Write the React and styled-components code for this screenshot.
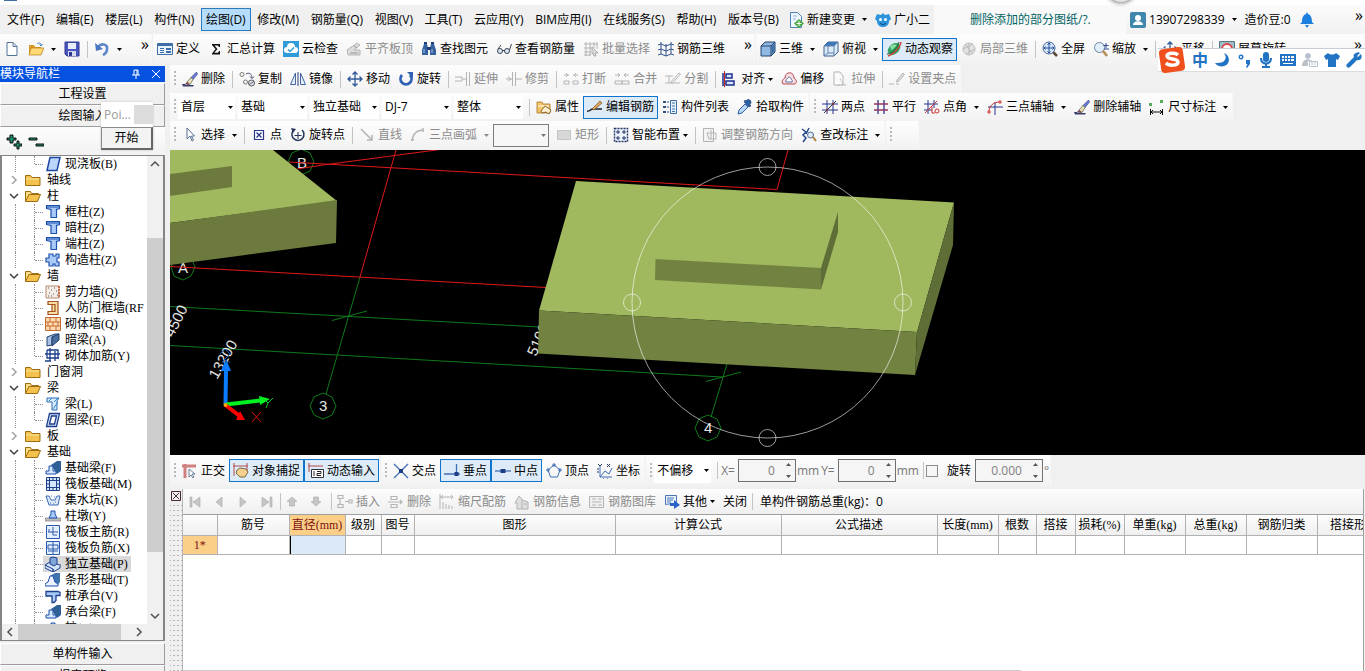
import React from 'react';
import styled, { createGlobalStyle, css } from 'styled-components';

const UI_FONT = '"Open Sans", "Noto Sans CJK SC", sans-serif';
const SONG_FONT = '"Liberation Serif", "Noto Sans CJK SC", serif';

const GlobalStyle = createGlobalStyle`
  * {
    box-sizing: border-box;
  }

  body {
    margin: 0;
    background: #f0f0f0;
    color: #000;
    font-family: ${UI_FONT};
    font-size: 12px;
    line-height: 16px;
    overflow: hidden;
  }

  button, input, select {
    font: inherit;
    color: inherit;
  }
`;

/* ---------- icons ---------- */

const G = '#b4b4b4';
const N = '#27348b';

const glyphs = {
  newFile: <path d="M3 1.500h6l4 4v9H3z M9 1.500v4h4" fill="#fff" stroke="#53759b" />,
  open: (
    <>
      <path d="M1 4h5l1 2h6v8H1z" fill="#d99a25" />
      <path d="M3 7h13l-3 7H1z" fill="#ffd976" stroke="#b37b14" strokeWidth=".7" />
      <path d="M9 3c2-2 4-1 4 1M11.500 3.500l1.500 1.500 1.500-2" fill="none" stroke="#3c7fb4" />
    </>
  ),
  save: (
    <>
      <path d="M1 1h14v14H3l-2-2z" fill="#4b56bf" stroke="#2d3694" />
      <path d="M4 2h8v6H4z" fill="#e8edfb" />
      <path d="M4 10h8v5H4z" fill="#d5daf0" />
      <path d="M5 11h3v4H5z" fill="#2d3694" />
    </>
  ),
  undo: (
    <>
      <path d="M4 6c4-5 10-2 9 2 0 3-2 5-4 6" fill="none" stroke="#5b86cc" strokeWidth="2.600" />
      <path d="M1 2l1 8 7-2z" fill="#4a77c4" />
    </>
  ),
  define: (
    <>
      <path d="M.5 2.500h15v11H.5z" fill="#eaf2fb" stroke="#3e6ea8" />
      <path d="M1 3h14v2H1z" fill="#3e6ea8" />
      <path d="M3 7h4v1H3zM3 9h4v1H3zM3 11h4v1H3zM9 7h5v2H9zM9 10h5v2H9z" fill="#3e6ea8" />
    </>
  ),
  sigma: <path d="M4 3h8v3h-1l-1-1.500H6.500L9.500 8l-3.300 3.800H10l1.200-1.800H12v3.500H4v-1L7.500 8 4 4z" fill="#111" />,
  cloud: (
    <>
      <path d="M0 0h16v16H0z" fill="#2f9bd8" />
      <path d="M4 12a3 3 0 0 1 0-6 4 4 0 0 1 8 0 3 3 0 0 1 0 6z" fill="#fff" />
      <path d="M5 8.500l2 2 4-4" fill="none" stroke="#2f9bd8" strokeWidth="1.500" />
    </>
  ),
  slabTop: (
    <>
      <path d="M1 9l10-7 3 2-6 5h6v5H2z" fill="#dcdcdc" stroke={G} />
      <path d="M4 12h8M8 5l3 2" stroke="#999" />
    </>
  ),
  binoc: (
    <>
      <path d="M3 3h3l1 4v7H1V9zM10 3h3l2 6v5H9V7z" fill="#35619e" />
      <path d="M6 6h4v3H6zM3 1h3v2H3zM10 1h3v2h-3z" fill="#1e3f75" />
      <path d="M3 8v4M11 8v4" stroke="#a8c8ee" />
    </>
  ),
  glasses: (
    <>
      <circle cx="4" cy="10" r="2.500" fill="#dce9f5" stroke="#3c3f52" />
      <circle cx="11" cy="10" r="2.500" fill="#dce9f5" stroke="#3c3f52" />
      <path d="M6.500 9.500h2M2 8l3-4M13.500 9l2-6" stroke="#3c3f52" fill="none" />
    </>
  ),
  batch: (
    <>
      <path d="M1 3h14M1 7h8M1 11h7M1 14h7M3 1v14M7 1v14M11 1v6M14 1v7" stroke={G} />
      <path d="M9 6l6 6h-3l1 3-2 0-1-3-1 1z" fill="#ddd" stroke="#999" strokeWidth=".7" />
    </>
  ),
  grid3d: <path d="M3 1v12M8 3v12M13 1v12M0 4l3-1 5 2 5-2 3 1M0 9l3-1 5 2 5-2 3 1M0 14l3-1 5 2 5-2 3 1" stroke="#34548c" fill="none" />,
  cube: (
    <>
      <path d="M1 5l4-4h10v10l-4 4H1z" fill="#8fb9e3" stroke="#24426b" />
      <path d="M1 5h10v10M11 5l4-4" fill="none" stroke="#24426b" />
      <path d="M11.500 5.500l3-3v8l-3 3z" fill="#3f6fa5" />
    </>
  ),
  cubeTop: (
    <>
      <path d="M1 5l4-4h10v10l-4 4H1z" fill="#dcebf8" stroke="#3a5f8c" />
      <path d="M1 5l4-4h10l-4 4z" fill="#3f78b8" />
      <path d="M1 5h10v10M11 5l4-4M5 5v7h6M5 12l-4 3" fill="none" stroke="#5c82ad" />
    </>
  ),
  orbit: (
    <>
      <ellipse cx="8" cy="8" rx="7" ry="5" fill="#33a564" transform="rotate(-40 8 8)" />
      <path d="M4 6c2-3 5-3 7-2l-5 5z" fill="#8be0a2" />
      <path d="M2 15C6 14 14 8 15 1" fill="none" stroke="#d03a2f" strokeWidth="1.400" />
      <path d="M1 13c4 0 10-5 12-12" fill="none" stroke="#20563a" />
    </>
  ),
  orbitOff: (
    <>
      <circle cx="8" cy="8" r="6" fill="#e2e2e2" stroke="#c0c0c0" />
      <path d="M4 3l8 10M2 8l10-5M5 13l9-5M8 2v12" stroke="#bbb" />
    </>
  ),
  full: (
    <>
      <path d="M11 11l4 4" stroke="#5a4a3a" strokeWidth="2.500" />
      <circle cx="7" cy="7" r="6" fill="#d6e8fa" stroke="#4a6590" />
      <path d="M7 2v10M2 7h10M5.500 3.500L7 2l1.500 1.500M5.500 10.500L7 12l1.500-1.500M3.500 5.500L2 7l1.500 1.500M10.500 5.500L12 7l-1.500 1.500" fill="none" stroke="#1f4e9c" />
    </>
  ),
  zoomIcon: (
    <>
      <circle cx="6.500" cy="6.500" r="5" fill="#e1effb" stroke="#71859f" />
      <path d="M10 10l4 5" stroke="#b78952" strokeWidth="2.500" />
      <path d="M13 2v5M10.500 4.500h5M11 8h5" stroke="#2d4b8f" />
    </>
  ),
  move: (
    <path d="M8 1v14M1 8h14M5.500 3.500L8 1l2.500 2.500M5.500 12.500L8 15l2.500-2.500M3.500 5.500L1 8l2.500 2.500M12.500 5.500L15 8l-2.500 2.500" fill="none" stroke="#325a9b" strokeWidth="1.300" />
  ),
  screenRotate: (
    <>
      <path d="M.5 .5h15v15H.5z" fill="#9bc0c9" stroke="#53777c" />
      <circle cx="8" cy="8" r="5" fill="#fff" stroke="#e0454f" strokeWidth="2" />
    </>
  ),
  brush: (
    <>
      <path d="M14.500 1L9 6.500l2 2L15.500 3z" fill="#6a7ad0" stroke="#30407f" strokeWidth=".6" />
      <path d="M9 6.500L5 11l3 2.500 3-5z" fill="#ece2b8" stroke="#554" strokeWidth=".7" />
      <path d="M5 11l-2 2 3 1 2-.5z" fill="#7a4350" />
      <path d="M0 13h3l1 1h8l-1 1.500H1z" fill="#39406e" />
    </>
  ),
  copy: (
    <>
      <circle cx="3" cy="3.500" r="2" fill="none" stroke="#777" />
      <circle cx="6.500" cy="11" r="2" fill="none" stroke="#777" />
      <circle cx="12.500" cy="12" r="3" fill="#e6e9ee" stroke="#555" />
      <path d="M7 3c3-2 6 0 6 4M11 5.500l2 2 2-2M10.500 13.500l4-3" fill="none" stroke="#44506e" />
    </>
  ),
  mirror: (
    <>
      <path d="M5.500 2v11.500H.5zM10.500 2v11.500h5z" fill="#e4eefa" stroke="#4365a2" />
      <path d="M8 1v14" stroke="#27407a" />
    </>
  ),
  rotate: (
    <>
      <path d="M4 4a5.500 5.500 0 1 0 8 0" fill="none" stroke="#2f62b5" strokeWidth="2.800" />
      <path d="M9 1h6v6z" fill="#2f62b5" />
    </>
  ),
  extend: <path d="M0 6h7v4H0M7 8h4M14.500 1v14M11.500 1v14" fill="none" stroke={G} />,
  trim: <path d="M0 8h6M10 8h6M6.500 1v14M9.500 1v14M2 6l3 2-3 2" fill="none" stroke={G} />,
  breakIcon: <path d="M1 4h5M10 4h5M1 10h5v3H1zM10 10h5v3h-5zM3 2l2 2-2 2M13 2l-2 2 2 2" fill="none" stroke={G} />,
  merge: <path d="M1 4h5M10 4h5M1 10h7v3H1zM8 10h7v3H8zM4 2l2 2-2 2M12 2l-2 2 2 2" fill="none" stroke={G} />,
  splitIcon: <path d="M0 5h8M0 12h15M4 5v7M6 11l8-9 1.500 1-8 9z" fill="none" stroke={G} />,
  align: (
    <>
      <path d="M2.500 0v16" stroke="#c9211e" />
      <path d="M1 2v13" stroke="#1b2f8f" strokeWidth="1.500" />
      <path d="M4 3h6v4H4zM4 10h8v4H4z" fill="#dbe6fa" stroke="#1b2f8f" strokeWidth="1.500" />
    </>
  ),
  offset: (
    <>
      <path d="M2 13c-2-3 0-5 2-6 0-7 9-7 9 0 3 2 3 5 1 6z" fill="#f7dede" stroke="#b64a55" />
      <path d="M5 11c-1-2 1-2 1-3 1-3 4-2 4 0 1 1 2 2 1 3z" fill="#fff" stroke="#5a6fa8" />
    </>
  ),
  stretch: (
    <>
      <path d="M2 1h6l3 4v9H2z" fill="#fafafa" stroke={G} />
      <path d="M8 8l4 6M6 14h9" stroke={G} strokeDasharray="2 1" />
    </>
  ),
  grip: <path d="M0 13h5M7 13h3M8 9l6-7 1.500 1.500-6 7-2 .5z" fill="#ddd" stroke={G} />,
  property: (
    <>
      <path d="M1 3h5l1 2h7v9H1z" fill="#f4c36a" stroke="#a87420" strokeWidth=".8" />
      <path d="M2 7h11" stroke="#fff" />
      <path d="M5 12l4-5 6 4-2 4-3-2-4 1z" fill="#fff1cf" stroke="#6f4a12" strokeWidth=".8" />
    </>
  ),
  editRebar: (
    <>
      <path d="M0 12c3 1 3-2 6-2h9" fill="none" stroke="#1f1f1f" strokeWidth="1.400" />
      <path d="M5 10l8-8 2 2-8 7z" fill="#e0a868" stroke="#6f4a12" strokeWidth=".7" />
    </>
  ),
  list: (
    <>
      <path d="M8.500 1.500h6v13h-6z" fill="#eaf2fb" stroke="#3e6ea8" />
      <path d="M10 4h3M10 7h3M10 10h3M10 12.500h3" stroke="#3e6ea8" />
      <path d="M1 2h3v2H1zM1 7h3v2H1zM1 12h3v2H1zM5 2.500h2v1H5zM5 7.500h2v1H5zM5 12.500h2v1H5z" fill="#34517e" />
    </>
  ),
  picker: (
    <>
      <path d="M9 2c2-3 5-1 5 1s-1 2-1 3l1 1-2 1-5-5 1-2z" fill="#2d5fa5" stroke="#1e3e6b" strokeWidth=".6" />
      <path d="M8 5l3 3-6 6-4 1 1-4z" fill="#b9d7f2" stroke="#2d5fa5" />
    </>
  ),
  twoPoint: (
    <>
      <path d="M5 1v14M11 1v14M0 5h16M0 11h16" stroke={N} />
      <path d="M2 14L14 2" stroke="#333" />
      <path d="M4 10l2 2M10 4l2 2" stroke="#c33" />
    </>
  ),
  parallel: (
    <>
      <path d="M5 1v14M11 1v14" stroke={N} strokeWidth="1.300" />
      <path d="M1 5h14M1 11h14" stroke="#93365b" strokeWidth="1.300" />
    </>
  ),
  angle: (
    <>
      <path d="M4 1v14M10 1v8M0 5h14M0 11h8" stroke={N} />
      <path d="M1 14L13 2" stroke="#c33" />
      <circle cx="13" cy="12" r="2" fill="none" stroke="#c33" />
      <path d="M8 8v6h3" fill="none" stroke="#c33" />
    </>
  ),
  threeAxis: (
    <>
      <path d="M8 3v13M1 8h15" stroke={N} />
      <path d="M2 13C2 7 6 3 13 3" fill="none" stroke="#c33" />
      <path d="M1 12h2v2H1zM12 2h2v2h-2z" fill="#fff" stroke="#c33" />
    </>
  ),
  dimension: (
    <>
      <path d="M0 4h3v3H0zM11 1h3v3h-3z" fill="#58ad5a" />
      <path d="M1.500 10v6M13.500 10v6M1.500 13h12M4 11l-2 2 2 2M11 11l2 2-2 2" fill="none" stroke="#111" />
    </>
  ),
  cursor: <path d="M5 1v11l3-3 2 5 1.500-.7-2-4.300h3z" fill="#fff" stroke="#5a6f94" />,
  point: (
    <>
      <path d="M3.500 3.500h9v9h-9z" fill="#fff" stroke={N} strokeWidth="1.200" />
      <path d="M5.500 5.500l5 5M10.500 5.500l-5 5" stroke={N} strokeWidth="1.300" />
    </>
  ),
  rotPoint: (
    <>
      <path d="M3 4a6 6 0 1 0 9-1" fill="none" stroke="#26355c" strokeWidth="1.500" />
      <path d="M1 1l5 1-3 4z" fill="#26355c" />
      <path d="M8 5v7M4.500 8.500h7" stroke="#26355c" />
    </>
  ),
  lineIcon: <path d="M2 2l11 11M13 8v5H8" fill="none" stroke={G} strokeWidth="1.500" />,
  arc: <path d="M2 14C3 7 7 3 13 3M13 1v4M1 13h3" fill="none" stroke={G} strokeWidth="1.500" />,
  rect: <path d="M1.500 3.500h13v9h-13z" fill="#d7d7d7" stroke="#c4c4c4" />,
  smart: (
    <>
      <path d="M1.500 1.500h13v13h-13z" fill="#eef3fb" stroke="#1f3566" strokeWidth="1.400" strokeDasharray="2 1" />
      <path d="M5 3v4M3 5h4M11 3v4M9 5h4M5 9v4M3 11h4M11 9v4M9 11h4" stroke="#1f3566" />
    </>
  ),
  adjust: (
    <>
      <path d="M1.500 1.500h10v13h-10z" fill="#f3f3f3" stroke={G} />
      <path d="M5 6h9v6H7zM9 3v9" fill="none" stroke={G} />
    </>
  ),
  checkMark: (
    <>
      <path d="M1 2l4 3-3 3 3 3-3 4M8 1L5 7" fill="none" stroke="#264a8d" strokeWidth="1.500" />
      <circle cx="9.500" cy="8" r="3" fill="#dceafa" stroke="#546b8f" />
      <path d="M12 10l3 4" stroke="#b07a3a" strokeWidth="2" />
    </>
  ),
  ortho: (
    <>
      <path d="M0 3h14M3 1v14" stroke="#d18080" strokeWidth="3" />
      <path d="M7 6v8l2-2 2 3 1-1-2-3h3z" fill="#fff" stroke="#4d6580" strokeWidth=".8" />
    </>
  ),
  snap: (
    <>
      <path d="M1 0v13M0 3h15M14 0v8" stroke="#b34d4d" />
      <path d="M4 7l3-2 6 1 2 3-3 5H7l-4-4z" fill="#f5d18d" stroke="#5e4a26" strokeWidth=".8" />
    </>
  ),
  dyn: (
    <>
      <path d="M1 0v9M0 3h15" stroke="#b34d4d" />
      <path d="M3.500 6.500h12v8h-12z" fill="#fff" stroke="#333" />
      <path d="M6 8v5M9 8.500h4v2H9v2h4" fill="none" stroke="#222" />
    </>
  ),
  cross: (
    <>
      <path d="M1 1l14 14M15 1L1 15" stroke="#3f6fb5" strokeWidth="1.300" />
      <path d="M6 6h4v4H6z" fill="#1d3e86" />
    </>
  ),
  perp: (
    <>
      <path d="M0 11h16M12.500 1v10" stroke="#3f6fb5" strokeWidth="1.300" />
      <path d="M10.500 9h4v4h-4z" fill="#1d3e86" />
    </>
  ),
  mid: (
    <>
      <path d="M0 8h16" stroke="#3f6fb5" strokeWidth="1.300" />
      <path d="M5.500 6h5v4h-5z" fill="#1d3e86" />
    </>
  ),
  vertex: <path d="M8 2l6 5-2.500 7h-7L2 7z M7 1h2v2H7z M1 6h2v2H1zM13 6h2v2h-2z" fill="none" stroke="#3f6fb5" />,
  coord: (
    <>
      <path d="M3 3v11h12M3 14l5-6 4 3 3-6" fill="none" stroke="#3f6fb5" />
      <path d="M1 1l2 2 2-2M10 1l3 3M13 1l-3 3M0 6h2M0 9h2M6 16h1M10 16h1" fill="none" stroke="#26355c" />
    </>
  ),
  first: <path d="M3 3h2v10H3zM13 3v10L6 8z" fill="#c6c6c6" stroke="#a8a8a8" strokeWidth=".6" />,
  prev: <path d="M11 3v10L5 8z" fill="#c6c6c6" stroke="#a8a8a8" strokeWidth=".6" />,
  next: <path d="M5 3v10l6-5z" fill="#c6c6c6" stroke="#a8a8a8" strokeWidth=".6" />,
  last: <path d="M11 3h2v10h-2zM3 3v10l7-5z" fill="#c6c6c6" stroke="#a8a8a8" strokeWidth=".6" />,
  up: <path d="M6 3l5 4.500H8.500V12h-5V7.500H1z" fill="#c6c6c6" stroke="#a8a8a8" strokeWidth=".6" />,
  down: <path d="M6 12l5-4.500H8.500V3h-5v4.500H1z" fill="#c6c6c6" stroke="#a8a8a8" strokeWidth=".6" />,
  insert: <path d="M1 1.500h5v3H1zM1 10.500h5v3H1zM3 5v5M8 7.500h4M12 6h3v3h-3z" fill="none" stroke={G} strokeWidth="1.200" />,
  remove: <path d="M3 2.500h6v3H3zM3 10.500h6v3H3zM0 8h14M12 6l2 2-2 2" fill="none" stroke={G} strokeWidth="1.200" />,
  scale: <path d="M1 0v15M1 3h13M4 1L2 3l2 2M12 1l2 2-2 2M4 8v7M7 10v5M10 11v4M13 12v3" fill="none" stroke={G} />,
  info: <path d="M1 9l4-7 3 3v10H3V9zM8 6l6 2v7H8M10 10h3" fill="#dedede" stroke={G} />,
  library: <path d="M.5 2.500h14v11H.5zM3 5h4M9 5h4M3 8h9M3 11h4M9 11h4" fill="#efefef" stroke={G} />,
  other: (
    <>
      <path d="M1.500 1.500h11v10l-4-2-7 1z" fill="#e7f0fb" stroke="#4d76b5" />
      <path d="M3 4h7M3 6h6M3 8h4" stroke="#4d76b5" />
      <path d="M6 9h4V6l6 5-6 4v-3H6z" fill="#2b62c9" />
    </>
  ),
  change: (
    <>
      <path d="M2.500 .5h7l4 4v11h-11z" fill="#eef6ff" stroke="#4f83b5" />
      <path d="M5 4h4M5 7h3" stroke="#8fb4d6" />
      <path d="M11 7l5 4.500L11 16l-5-4.500z" fill="#49a942" />
      <path d="M11 9v5M8.500 11.500h5" stroke="#fff" />
    </>
  ),
  mascot: (
    <>
      <path d="M8 1l2 2 4-1 2 5-2 2c0 4-3 6-6 6s-6-2-6-6L0 7l2-5 4 1z" fill="#2f93dc" />
      <circle cx="5.500" cy="7.500" r="1.500" fill="#fff" />
      <circle cx="10.500" cy="7.500" r="1.500" fill="#fff" />
      <path d="M5 11c2 2 4 2 6 0" fill="none" stroke="#0c3c6c" />
    </>
  ),
  user: (
    <>
      <rect width="16" height="16" rx="2" fill="#3f87ad" />
      <circle cx="8" cy="6" r="3" fill="#fff" />
      <path d="M3 13c0-5 10-5 10 0z" fill="#fff" />
    </>
  ),
  bell: <path d="M8 0l1 2c3 1 4 4 4 8l2 2H1l2-2c0-4 1-7 4-8zM6 13h4l-2 3z" fill="#1d7fe0" />,

  /* tree */
  folder: (
    <>
      <path d="M.5 3.500h5l1.500 2h8v8H.5z" fill="#f4c14d" stroke="#9c6d14" />
      <path d="M1 7h13" stroke="#fde9a8" />
    </>
  ),
  folderOpen: (
    <>
      <path d="M.5 13V3.500h5l1 2h7V7" fill="#f9dc83" stroke="#9c6d14" />
      <path d="M.5 13.500L4 6.500h11.500l-3 7z" fill="#f4c14d" stroke="#9c6d14" />
    </>
  ),
  slab: <path d="M5 1.500h10L12 14.500H2z" fill="#bcd6fb" stroke="#1d46a0" strokeWidth="1.500" />,
  column: <path d="M1.500 1.500h13v3l-3 1v8H6v-8l-4.500-1z M1.500 3h13" fill="#a9cbf7" stroke="#1d4fae" strokeWidth="1.200" />,
  tieColumn: <path d="M4 2h4v2h3V2h3v4h-2v4h2v4h-4v-2H8v2H4v-4H1V6h3z" fill="#a9cbf7" stroke="#1d4fae" strokeWidth="1.200" />,
  shearWall: (
    <>
      <path d="M1 2h13v12H1z" fill="#f5ede6" stroke="#b98b70" />
      <path d="M3 4h1M6 6h1M9 4h1M4 9h1M8 10h1M11 7h1M6 12h1M12 11h1M3 12h1" stroke="#555" />
      <path d="M14 2v12" stroke="#c4532a" strokeWidth="1.500" strokeDasharray="2 1" />
    </>
  ),
  doorWall: <path d="M3 1.500h10v13H3v-3h4v-7H3zM7 4.500h3v7H7" fill="#f8dfa6" stroke="#a4511d" strokeWidth="1.200" />,
  brick: (
    <>
      <path d="M.5 1.500h15v13H.5z" fill="#ffdcb4" stroke="#c4682c" />
      <path d="M1 6h14M1 10h14M5 2v4M11 2v4M8 6v4M3 6v4M13 6v4M5 10v4M11 10v4" stroke="#c4682c" />
    </>
  ),
  hiddenBeam: (
    <>
      <path d="M2 5l8-3h4l-7 3v8l-5 1z" fill="#a9c3e6" stroke="#25406f" />
      <path d="M7 5l7-3v6l-7 6z" fill="#4a6f9f" stroke="#25406f" />
    </>
  ),
  wallRebar: <path d="M2 2h11v9M2 2v8h12M5 0v13M10 3v10M0 6h15M0 13h6" fill="none" stroke="#1d3f8c" strokeWidth="1.300" />,
  beam: (
    <>
      <path d="M2 2h12l-2 3v9H7V6H2z" fill="#d8e9fd" stroke="#2c6cb0" />
      <path d="M8 13l5-7M4 5l3-3M9 6l4-4" stroke="#2c8cd0" />
    </>
  ),
  ringBeam: <path d="M4.500 1.500h10l-3 13h-10zM6.500 4h5l-2 8h-5z" fill="#cfe1fb" fillRule="evenodd" stroke="#1d3f8c" strokeWidth="1.300" />,
  footBeam: (
    <>
      <path d="M6 5l6-4h4v10l-4 3z" fill="#2e6095" />
      <path d="M1 14v-3h3V6h4v5h3v3z" fill="#d4e6fb" stroke="#1d4fae" />
    </>
  ),
  raft: <path d="M1.500 1.500h13v13h-13zM4.500 4.500h7v7h-7zM4.500 1.500v13M8 1.500v3M8 11.500v3M11.500 1.500v13M1.500 4.500h13M1.500 8h3M11.500 8h3M1.500 11.500h13" fill="#d4e6fb" stroke="#1d3f8c" />,
  pit: (
    <>
      <path d="M1 4h3l2 4h4l2-4h3l-2 9H4z" fill="#dbe9fa" stroke="#3a6ab4" />
      <path d="M6 4h1M9 5h1M5 11h1M8 12h1M10 10h1" stroke="#3a6ab4" />
    </>
  ),
  pier: (
    <>
      <path d="M0 10h16v3H0z" fill="#bdbdbd" stroke="#777" strokeWidth=".6" />
      <path d="M6 3h4v3l2 4H4l2-4z" fill="#a9cbf7" stroke="#1d4fae" />
    </>
  ),
  raftMain: <path d="M1.500 1.500h13v13h-13zM3 8h10M8 3v8h4M4 8V5" fill="#e4effd" stroke="#2b59b0" />,
  raftNeg: <path d="M1.500 1.500h13v13h-13zM3 5h10v4H3zM3 11h10M8 2v12" fill="#e4effd" stroke="#2b59b0" />,
  isoFoot: (
    <>
      <path d="M0 9l5-3 10 3-7 5z" fill="#d4e6fb" stroke="#1d3f8c" />
      <path d="M0 9v3l8 4v-3zM8 13v3l7-4V8" fill="#d4e6fb" stroke="#1d3f8c" />
      <path d="M5 2l3-1 4 1v6l-3 2-4-2z" fill="#7ea6d8" stroke="#1d3f8c" />
    </>
  ),
  stripFoot: (
    <>
      <path d="M5 4l5-3h5v9l-3 4z" fill="#3f73ad" />
      <path d="M0 14v-2l3-2 2-6h3l2 6 3 2v2z" fill="#e9f2fd" stroke="#1d4fae" />
    </>
  ),
  pileCap: <path d="M1 3.500h12l2 1v3h-4v5l-2 2H7V8H1z" fill="#a9cbf7" stroke="#1d3f8c" strokeWidth="1.300" />,
};

const IconSvg = styled.svg`
  flex: none;
  width: 16px;
  height: 16px;
`;

const Icon = ({ name }) => (
  <IconSvg viewBox="0 0 16 16" aria-hidden="true">{glyphs[name]}</IconSvg>
);

const CaretSvg = styled.svg`
  flex: none;
  width: 5px;
  height: 3px;
`;

const Caret = () => (
  <CaretSvg viewBox="0 0 5 3" aria-hidden="true">
    <path d="M0 0h5L2.500 3z" fill="currentColor" />
  </CaretSvg>
);

/* ---------- frame ---------- */

const Window = styled.div`
  position: relative;
  display: flex;
  flex-direction: column;
  height: 100vh;
  overflow: hidden;
  background: #f0f0f0;
`;

const TitleEdge = styled.div`
  flex: none;
  height: 5px;
  padding-left: 4px;
  background: #fff;

  &::before {
    content: '';
    display: block;
    width: 13px;
    height: 1px;
    background: #3f6f9f;
  }
`;

const Puck = styled.div`
  position: absolute;
  top: -28px;
  left: 81%;
  width: 30px;
  height: 30px;
  border-radius: 50%;
  background: #e4e4e4;
  box-shadow: 0 0 4px 1px #777;
`;

const MenuBar = styled.nav`
  display: flex;
  flex: none;
  align-items: center;
  height: 29px;
  padding-left: 2px;
  white-space: nowrap;
`;

const MenuList = styled.div`
  display: flex;
  flex: none;
  justify-content: space-between;
  width: 782px;
`;

const MenuItem = styled.button`
  height: 23px;
  padding: 0 4px;
  border: 1px solid ${p => (p.$active ? '#2a7ac0' : 'transparent')};
  background: ${p => (p.$active ? '#b5dcfb' : 'transparent')};
`;

const Notice = styled.a`
  display: flex;
  flex: none;
  align-items: center;
  height: 29px;
  width: 192px;
  padding-left: 36px;
  background: #f9f9f9;
  color: #006464;
  text-decoration: none;
`;

const AccountBar = styled.div`
  display: flex;
  flex: 1;
  align-items: center;
  height: 29px;
  background: linear-gradient(#fbfbfb, #f1f1f1);
`;

const ToolRow = styled.div`
  display: flex;
  flex: none;
  height: ${p => (p.$tall ? 30 : 28)}px;
  white-space: nowrap;
`;

const Toolbar = styled.div`
  display: flex;
  flex: ${p => (p.$grow ? 1 : 'none')};
  align-items: center;
  background: linear-gradient(#fdfdfd, #f2f2f2);
  border-right: 1px solid #f7f7f7;

  & + & {
    margin-left: 1px;
  }
`;

const Grip = styled.span`
  flex: none;
  width: 2px;
  height: 16px;
  margin: 0 2px 0 4px;
  background: repeating-linear-gradient(#b9b9b9 0 2px, transparent 2px 4px);
`;

const Sep = styled.span`
  flex: none;
  width: 1px;
  height: 17px;
  margin: 0 2px 0 3px;
  background: #c3c3c3;
`;

const ToolButton = styled.button`
  display: flex;
  flex: none;
  align-items: center;
  height: 23px;
  padding: 0 3px;
  border: 1px solid ${p => (p.$active ? '#0f74cc' : 'transparent')};
  background: ${p => (p.$active ? '#dcebf7' : 'transparent')};
  color: ${p => (p.disabled ? '#8b8b8b' : '#000')};

  ${IconSvg} + span {
    margin-left: 3px;
  }

  ${CaretSvg} {
    margin-left: ${p => (p.$menu ? 3 : 7)}px;
  }
`;

const Overflow = styled.button`
  align-self: stretch;
  padding: 0 2px 10px 15px;
  margin-left: ${p => (p.$end ? 'auto' : 0)};
  border: 0;
  background: none;
  font-size: 16px;
  line-height: 16px;
`;

const Tool = ({ icon, label, active, off, split, menu, name }) => (
  <ToolButton type="button" $active={active} $menu={menu} disabled={off} aria-label={label || name}>
    {icon && <Icon name={icon} />}
    {label && <span>{label}</span>}
    {(split || menu) && <Caret />}
  </ToolButton>
);

// A tool list is plain data; '|' stands for a separator
const Tools = ({ items }) =>
  items.map((item, i) => (item === '|' ? <Sep key={i} /> : <Tool key={i} {...item} />));

const ComboBox = styled.label`
  display: flex;
  flex: none;
  align-items: center;
  width: ${p => (p.$narrow ? 57 : 69)}px;
  height: 24px;
  padding-right: 2px;
  margin-right: 3px;
  background: #fff;

  ${p => p.$framed && css`
    width: 56px;
    height: 23px;
    border: 1px solid #7c7c7c;
    background: #f7f7f7;
    color: #777;
  `}
`;

const Select = styled.select`
  flex: 1;
  min-width: 0;
  height: 100%;
  padding: 0 0 0 3px;
  appearance: none;
  border: 0;
  background: transparent;
`;

const Combo = ({ value, label, narrow, framed }) => (
  <ComboBox $narrow={narrow} $framed={framed}>
    <Select aria-label={label} defaultValue={value}>
      <option>{value}</option>
    </Select>
    <Caret />
  </ComboBox>
);

/* ---------- input method bar ---------- */

const ImeBar = styled.div`
  position: absolute;
  top: 48px;
  right: 0;
  display: flex;
  align-items: center;
  gap: 6px;
  width: 207px;
  height: 24px;
  border-top: 1px solid #c9ced6;
  border-bottom: 1px solid #dcdcdc;
  background: #fff;
`;

const ImeLogo = styled.svg`
  flex: none;
  width: 28px;
  height: 28px;
`;

const ImeIcon = styled.svg`
  flex: none;
  width: 16px;
  height: 16px;
  fill: #2173c4;
`;

const ImeMode = styled.button`
  width: 16px;
  padding: 0;
  border: 0;
  background: none;
  color: #2173c4;
  font-size: 16px;
  font-weight: 700;
`;

const imeIcons = [
  <path d="M10 1c4 5 1 11-9 10 3 5 13 5 14-3 0-3-2-6-5-7z" />,
  <path d="M5 2.500a2.500 2.500 0 1 0 .1 0zM5 4a1 1 0 1 1-.1 0zM10 8h4v4l-3 4-1-1 1.500-3H10z" fillRule="evenodd" />,
  <path d="M8 0a3 3 0 0 1 3 3v4a3 3 0 0 1-6 0V3a3 3 0 0 1 3-3zM2 6h2c0 6 8 6 8 0h2c0 4-2 6-5 6.500V14h3v2H4v-2h3v-1.500C4 12 2 10 2 6z" />,
  <path d="M0 2h16v12H0zM2 4v2h2V4zM5 4v2h2V4zM8 4v2h2V4zM11 4v2h3V4zM2 7v2h2V7zM5 7v2h2V7zM8 7v2h2V7zM11 7v2h3V7zM3 11v1h10v-1z" fillRule="evenodd" />,
  <>
    <path d="M6 1a3 3 0 1 1-.1 0zM0 14c0-8 8-8 10-5H6v5z" fill="#b8c0cc" />
    <path d="M7.500 9.500h8v5h-8zM10 10v3M13 10v3" fill="#fff" stroke="#b8c0cc" />
  </>,
  <path d="M4 1c2 2 6 2 8 0l4 3-2 4-2-1v8H4V7L2 8 0 4z" />,
  <path d="M10 1c1-1 3-1 4 0l-3 3 1 1 3-3c2 4-1 7-4 6l-7 7c-2 2-5-1-3-3l7-7c-1-2 0-3 2-4z" />,
];

/* ---------- left navigator ---------- */

const Body = styled.div`
  display: flex;
  flex: 1;
  min-height: 0;
`;

const Navigator = styled.aside`
  display: flex;
  flex: none;
  flex-direction: column;
  width: 165px;
  margin-top: 2px;
  overflow: hidden;
  font-family: ${SONG_FONT};
`;

const NavTitle = styled.h1`
  display: flex;
  flex: none;
  align-items: center;
  gap: 10px;
  height: 16px;
  margin: 0 0 1px;
  padding-right: 4px;
  background: #0552e1;
  color: #fff;
  font-size: 12px;
  font-weight: 400;

  span {
    flex: 1;
  }

  svg {
    width: 10px;
    height: 10px;
    fill: none;
    stroke: #fff;
  }
`;

const NavSection = styled.button`
  flex: none;
  height: 22px;
  padding: 0;
  border: 1px solid #fff;
  border-right-color: #9c9c9c;
  border-bottom-color: #9c9c9c;
  background: #f0f0f0;
`;

const NavTools = styled.div`
  display: flex;
  flex: none;
  align-items: center;
  gap: 6px;
  height: 28px;
  padding: 1px 0 0 6px;
  background: linear-gradient(#fdfdfd, #f2f2f2);
`;

const TreeFrame = styled.div`
  display: grid;
  flex: 1;
  grid-template: minmax(0, 1fr) 16px / minmax(0, 1fr) 16px;
  min-height: 0;
  border: 1px solid #858585;
  border-width: 1px 2px 1px 2px;
  background: #fff;
`;

const Tree = styled.ul`
  margin: 0;
  padding: 0 0 0 1px;
  list-style: none;
  overflow: hidden;
`;

const TreeRow = styled.li`
  display: flex;
  align-items: center;
  height: 16px;
  white-space: nowrap;
`;

const Expander = styled.svg`
  flex: none;
  width: 22px;
  height: 8px;
  fill: none;
  stroke: ${p => (p.$open ? '#404040' : '#a0a0a0')};
  stroke-width: 1.500;
`;

const Guide = styled.span`
  flex: none;
  align-self: flex-start;
  width: ${p => (p.$inner ? 19 : 13)}px;
  height: ${p => (p.$last ? 8 : 16)}px;
  border-right: 1px dotted #909090;
`;

const Dash = styled.span`
  flex: none;
  width: 8px;
  border-top: 1px dotted #909090;
`;

const TreeLabel = styled.span`
  display: flex;
  align-items: center;
  gap: ${p => (p.$root ? 6 : 4)}px;
  height: 16px;
  padding: ${p => (p.$root ? '0' : '0 3px 0 2px')};
  background: ${p => (p.$selected ? '#d9d9d9' : 'transparent')};
`;

const ScrollTrack = styled.div`
  display: flex;
  flex-direction: ${p => (p.$across ? 'row' : 'column')};
  align-items: center;
  background: #f0f0f0;

  svg {
    flex: none;
    width: 16px;
    height: 16px;
    fill: none;
    stroke: #505050;
    stroke-width: 1.500;
  }

  svg:last-child {
    margin: ${p => (p.$across ? '0 0 0 auto' : 'auto 0 0')};
  }
`;

const Thumb = styled.span`
  flex: none;
  width: ${p => (p.$across ? '71%' : '100%')};
  height: ${p => (p.$across ? '16px' : '67%')};
  margin-top: ${p => (p.$across ? 0 : '66px')};
  background: #cdcdcd;
`;

const NavFooter = styled.div`
  display: flex;
  flex: none;
  flex-direction: column;
  height: 30px;
  padding-top: 2px;
  overflow: hidden;
`;

const tree = [
  { icon: 'slab', label: '现浇板(B)', last: true },
  { root: true, label: '轴线' },
  { root: true, open: true, label: '柱' },
  { icon: 'column', label: '框柱(Z)' },
  { icon: 'column', label: '暗柱(Z)' },
  { icon: 'column', label: '端柱(Z)' },
  { icon: 'tieColumn', label: '构造柱(Z)', last: true },
  { root: true, open: true, label: '墙' },
  { icon: 'shearWall', label: '剪力墙(Q)' },
  { icon: 'doorWall', label: '人防门框墙(RF' },
  { icon: 'brick', label: '砌体墙(Q)' },
  { icon: 'hiddenBeam', label: '暗梁(A)' },
  { icon: 'wallRebar', label: '砌体加筋(Y)', last: true },
  { root: true, label: '门窗洞' },
  { root: true, open: true, label: '梁' },
  { icon: 'beam', label: '梁(L)' },
  { icon: 'ringBeam', label: '圈梁(E)', last: true },
  { root: true, label: '板' },
  { root: true, open: true, label: '基础' },
  { icon: 'footBeam', label: '基础梁(F)' },
  { icon: 'raft', label: '筏板基础(M)' },
  { icon: 'pit', label: '集水坑(K)' },
  { icon: 'pier', label: '柱墩(Y)' },
  { icon: 'raftMain', label: '筏板主筋(R)' },
  { icon: 'raftNeg', label: '筏板负筋(X)' },
  { icon: 'isoFoot', label: '独立基础(P)', selected: true },
  { icon: 'stripFoot', label: '条形基础(T)' },
  { icon: 'pileCap', label: '桩承台(V)' },
  { icon: 'footBeam', label: '承台梁(F)' },
  { icon: 'pier', label: '桩(U)' },
];

const TreeNode = ({ root, open, icon, label, last, selected }) => (
  <TreeRow>
    {root ? (
      <Expander viewBox="0 0 22 8" $open={open}>
        <path d={open ? 'M7 2l4 4 4-4' : 'M9 0l4 4-4 4'} />
      </Expander>
    ) : (
      <>
        <Guide />
        <Guide $inner $last={last} />
        <Dash />
      </>
    )}
    <TreeLabel $root={root} $selected={selected}>
      <Icon name={root ? (open ? 'folderOpen' : 'folder') : icon} />
      {label}
    </TreeLabel>
  </TreeRow>
);

const FloatBox = styled.div`
  position: absolute;
  top: 102px;
  left: 101px;
  width: 52px;
  background: #fff;
  box-shadow: 0 0 2px #bbb;
`;

const FloatTitle = styled.div`
  display: flex;
  align-items: center;
  height: 25px;
  padding-left: 3px;
  color: #9a9a9a;

  &::after {
    content: '';
    width: 19px;
    height: 19px;
    margin-left: auto;
    background: #dcdcdc;
  }
`;

const StartButton = styled.button`
  width: 100%;
  height: 23px;
  padding: 0;
  border: 1px solid #8a8a8a;
  border-right: 2px solid #666;
  border-bottom: 2px solid #666;
  background: #f3f3f3;
`;

/* ---------- work area ---------- */

const Work = styled.main`
  display: flex;
  flex: 1;
  flex-direction: column;
  min-width: 0;
  padding: 1px 0 0 5px;
`;

const Viewport = styled.svg`
  flex: 305 1 0;
  width: 100%;
  min-height: 0;
  margin-top: 1px;
  background: #000;
  font-family: "Liberation Sans", sans-serif;
  font-size: 15px;
  fill: #e6e6e6;
`;

const red = '#e01818';
const green = '#107a1c';

const Scene = () => (
  <Viewport viewBox="170 150 1195 305" preserveAspectRatio="xMinYMin slice" role="img" aria-label="三维视图">
    <g fill="none" stroke={green}>
      <path d="M170 306.500L539 327M170 345.500L722 377M332 320.500l35-9.500M706 381.500l35-9.500M727 364l-16 53M360 277l-34 117" />
      <path d="M336 406l-4 9-9 4-9-4-4-9 4-9 9-4 9 4z M721 428l-4 9-9 4-9-4-4-9 4-9 9-4 9 4z" />
      <path d="M314 162l-4 9-9 4-9-4-4-9 4-9 9-4 9 4z M195 267l-4 9-8 4-9-4-3-9 3-9 9-4 8 4z" />
    </g>
    <text x="178" y="273">A</text>
    <text x="297" y="168">B</text>
    <text x="319" y="411">3</text>
    <text x="704" y="433">4</text>
    <text transform="translate(173 338) rotate(-63)">4500</text>
    <text transform="translate(217 380) rotate(-60)">13200</text>
    <text transform="translate(536 357) rotate(-66)">5100</text>
    <path d="M170 266.500L546 287.500M289 162l488 27.500L788 150M396 150l-36 127M297 169l26-4 117-15.500" fill="none" stroke={red} />

    <path d="M170 150h103l64 51-167 22z" fill="#a0b85e" />
    <path d="M170 223l167-23-1 43-166 22z" fill="#6c7b3d" />
    <path d="M170 174l62-8v21l-62 9z" fill="#6c7b3d" />

    <path d="M576 181l378 21.500L917 332l-378-21.500z" fill="#a0b85e" />
    <path d="M539 310.500L917 332l-2 43-377-21.500z" fill="#728341" />
    <path d="M954 202.500l-1 42.500-38 130 2-43z" fill="#5f6e37" />
    <path d="M655.500 259l165.500 9v21.500L655 280z" fill="#728341" />
    <path d="M821 268l17-56v20l-17 57.500z" fill="#5f6e37" />

    <g fill="none" stroke="#fff" strokeOpacity=".6">
      <circle cx="767.500" cy="302.500" r="135.500" />
      <circle cx="767.500" cy="167" r="8.500" />
      <circle cx="767.500" cy="438" r="8.500" />
      <circle cx="632" cy="302.500" r="8.500" />
      <circle cx="903" cy="302.500" r="8.500" />
    </g>

    <path d="M225.500 404l.5-34" stroke="#0a7cff" strokeWidth="4" />
    <path d="M221 371l5-12 5 12z" fill="#0a7cff" />
    <path d="M220 354l5-5 5 5-8 8h8" fill="none" stroke="#1a5ca8" />
    <path d="M226 404.500l34-4" stroke="#00f020" strokeWidth="4" />
    <path d="M259 396l11 3-10 6z" fill="#00f020" />
    <path d="M265 400l3 3 5-5M268 403l-2 5" fill="none" stroke="#00d020" />
    <path d="M226 405.500l13 10" stroke="#f00" strokeWidth="4" />
    <path d="M240 411l5 9-9 0z" fill="#f00" />
    <path d="M252 412l9 10M261 412l-9 10" stroke="#e01010" />
    <circle cx="225.500" cy="405" r="2" fill="#ffa500" />
  </Viewport>
);

const SnapRow = styled(ToolRow)`
  height: 31px;
`;

const Unit = styled.span`
  padding: 0 1px;
  color: #777;
  font-size: 12px;
`;

const NumberBox = styled.span`
  display: flex;
  align-items: center;
  width: ${p => (p.$wide ? 68 : 58)}px;
  height: 23px;
  padding-right: 3px;
  margin-left: 2px;
  border: 1px solid #707070;
  background: #f5f5f5;
  color: #7f7f7f;

  input {
    flex: 1;
    min-width: 0;
    padding: 0 10px 0 0;
    border: 0;
    background: none;
    text-align: right;
  }

  svg {
    width: 7px;
    height: 17px;
    fill: #555;
  }
`;

const NumberField = ({ label, value, wide }) => (
  <NumberBox $wide={wide}>
    <input aria-label={label} defaultValue={value} />
    <svg viewBox="0 0 7 17" aria-hidden="true"><path d="M1 4l2.500-3L6 4zM1 13h5l-2.500 3z" /></svg>
  </NumberBox>
);

const RotateLabel = styled.label`
  display: flex;
  align-items: center;
  gap: 9px;
  padding-right: 2px;

  input {
    width: 12px;
    height: 12px;
    margin: 0;
    appearance: none;
    border: 1px solid #8d8d8d;
    background: #f7f7f7;
  }
`;

const Dock = styled.section`
  display: flex;
  flex: 182 1 0;
  min-height: 0;
  padding: 3px 1px 0 0;
`;

const DockGrip = styled.div`
  flex: none;
  width: 12px;
  background: radial-gradient(circle, #b5b5b5 1px, transparent 1px) 2px 14px / 4px 5px;

  button {
    display: block;
    width: 100%;
    height: 14px;
    padding: 0;
    border: 0;
    background: #f0f0f0;
  }

  svg {
    display: block;
    width: 12px;
    height: 12px;
  }
`;

const DockPane = styled.div`
  display: flex;
  flex: 1;
  flex-direction: column;
  min-width: 0;
  overflow: hidden;
  border-right: 1px solid #a0a0a0;
  border-left: 1px solid #b5b5b5;
  background: #fff;
`;

const DockToolbar = styled.div`
  display: flex;
  flex: none;
  align-items: center;
  height: 26px;
  border-bottom: 1px solid #9f9f9f;
  background: linear-gradient(#fdfdfd, #efefef);
  white-space: nowrap;

  ${Sep} {
    margin: 0 1px;
  }
`;

const Total = styled.output`
  padding-left: 6px;
`;

const TableWrap = styled.div`
  flex: 1;
  min-height: 0;
  overflow: hidden;
`;

const Sheet = styled.table`
  width: 1208px;
  table-layout: fixed;
  border-collapse: collapse;
  font-family: ${SONG_FONT};

  th, td {
    height: 19px;
    padding: 0;
    border-right: 1px solid #b2b2b2;
    border-bottom: 1px solid #b2b2b2;
    font-weight: 400;
    text-align: center;
    white-space: nowrap;
  }

  thead th {
    height: 20px;
  }
`;

const HeadCell = styled.th`
  background: ${p => (p.$hot ? '#fbcf87' : 'linear-gradient(#fdfdfd, #efefef)')};
  color: ${p => (p.$hot ? '#7b1113' : '#000')};
`;

const CurrentCell = styled.td`
  background: #dbeaf6;
  box-shadow: inset 1px 0 #000;
`;

const ScrollLine = styled.div`
  flex: none;
  width: 71%;
  height: 1px;
  background: #cdcdcd;
`;

const columns = [
  ['', 34], ['筋号', 72], ['直径(mm)', 56], ['级别', 36], ['图号', 33], ['图形', 201],
  ['计算公式', 166], ['公式描述', 156], ['长度(mm)', 61], ['根数', 38], ['搭接', 39],
  ['损耗(%)', 49], ['单重(kg)', 61], ['总重(kg)', 61], ['钢筋归类', 71], ['搭接形式', 74],
];

/* ---------- toolbar contents ---------- */

const menus = [
  '文件(F)', '编辑(E)', '楼层(L)', '构件(N)', '绘图(D)', '修改(M)', '钢筋量(Q)', '视图(V)',
  '工具(T)', '云应用(Y)', 'BIM应用(I)', '在线服务(S)', '帮助(H)', '版本号(B)',
];

const fileTools = [
  { icon: 'newFile', name: '新建' },
  { icon: 'open', name: '打开', split: true },
  { icon: 'save', name: '保存' },
  '|',
  { icon: 'undo', name: '撤销', split: true },
];

const calcTools = [
  { icon: 'define', label: '定义' },
  { icon: 'sigma', label: '汇总计算' },
  { icon: 'cloud', label: '云检查' },
  { icon: 'slabTop', label: '平齐板顶', off: true },
  { icon: 'binoc', label: '查找图元' },
  { icon: 'glasses', label: '查看钢筋量' },
  { icon: 'batch', label: '批量选择', off: true },
  { icon: 'grid3d', label: '钢筋三维' },
];

const viewTools = [
  { icon: 'cube', label: '三维', split: true },
  { icon: 'cubeTop', label: '俯视', split: true },
  { icon: 'orbit', label: '动态观察', active: true },
  { icon: 'orbitOff', label: '局部三维', off: true },
  '|',
  { icon: 'full', label: '全屏' },
  { icon: 'zoomIcon', label: '缩放', split: true },
  '|',
  { icon: 'move', label: '平移' },
  '|',
  { icon: 'screenRotate', label: '屏幕旋转' },
];

const editTools = [
  { icon: 'brush', label: '删除' },
  '|',
  { icon: 'copy', label: '复制' },
  { icon: 'mirror', label: '镜像' },
  '|',
  { icon: 'move', label: '移动' },
  { icon: 'rotate', label: '旋转' },
  '|',
  { icon: 'extend', label: '延伸', off: true },
  { icon: 'trim', label: '修剪', off: true },
  '|',
  { icon: 'breakIcon', label: '打断', off: true },
  { icon: 'merge', label: '合并', off: true },
  { icon: 'splitIcon', label: '分割', off: true },
  '|',
  { icon: 'align', label: '对齐', menu: true },
  { icon: 'offset', label: '偏移' },
  { icon: 'stretch', label: '拉伸', off: true },
  '|',
  { icon: 'grip', label: '设置夹点', off: true },
];

const memberTools = [
  '|',
  { icon: 'property', label: '属性' },
  { icon: 'editRebar', label: '编辑钢筋', active: true },
  { icon: 'list', label: '构件列表' },
  { icon: 'picker', label: '拾取构件' },
];

const axisTools = [
  { icon: 'twoPoint', label: '两点' },
  { icon: 'parallel', label: '平行' },
  { icon: 'angle', label: '点角', split: true },
  { icon: 'threeAxis', label: '三点辅轴', split: true },
  { icon: 'brush', label: '删除辅轴' },
  { icon: 'dimension', label: '尺寸标注', split: true },
];

const drawTools = [
  { icon: 'cursor', label: '选择', split: true },
  '|',
  { icon: 'point', label: '点' },
  { icon: 'rotPoint', label: '旋转点' },
  '|',
  { icon: 'lineIcon', label: '直线', off: true },
  { icon: 'arc', label: '三点画弧', off: true, split: true },
];

const layoutTools = [
  { icon: 'rect', label: '矩形', off: true },
  '|',
  { icon: 'smart', label: '智能布置', menu: true },
  '|',
  { icon: 'adjust', label: '调整钢筋方向', off: true },
  { icon: 'checkMark', label: '查改标注', split: true },
];

const modeTools = [
  { icon: 'ortho', label: '正交' },
  { icon: 'snap', label: '对象捕捉', active: true },
  { icon: 'dyn', label: '动态输入', active: true },
];

const snapTools = [
  { icon: 'cross', label: '交点' },
  { icon: 'perp', label: '垂点', active: true },
  { icon: 'mid', label: '中点', active: true },
  { icon: 'vertex', label: '顶点' },
  { icon: 'coord', label: '坐标' },
];

const rebarTools = [
  { icon: 'first', name: '首行', off: true },
  { icon: 'prev', name: '上一行', off: true },
  { icon: 'next', name: '下一行', off: true },
  { icon: 'last', name: '末行', off: true },
  '|',
  { icon: 'up', name: '上移', off: true },
  { icon: 'down', name: '下移', off: true },
  '|',
  { icon: 'insert', label: '插入', off: true },
  { icon: 'remove', label: '删除', off: true },
  { icon: 'scale', label: '缩尺配筋', off: true },
  { icon: 'info', label: '钢筋信息', off: true },
  { icon: 'library', label: '钢筋图库', off: true },
  { icon: 'other', label: '其他', menu: true },
  { label: '关闭' },
  '|',
];

const NavPanel = () => (
  <Navigator>
    <NavTitle>
      <span>模块导航栏</span>
      <svg viewBox="0 0 10 10"><path d="M3 1h4v5M3 1v5M1 6h8M5 6v4M6 1v5" /></svg>
      <svg viewBox="0 0 10 10"><path d="M1 1l8 8M9 1L1 9" /></svg>
    </NavTitle>
    <NavSection type="button">工程设置</NavSection>
    <NavSection type="button">绘图输入</NavSection>
    <NavTools>
      <IconSvg viewBox="0 0 16 16">
        <path d="M4 1h3v3h3v2H7v3H4V6H1V4h3zM11 7h2v3h3v2h-3v3h-2v-3H8v-2h3z" fill="#1d8c6c" stroke="#111" />
      </IconSvg>
      <IconSvg viewBox="0 0 16 16">
        <path d="M1 4h8v2H1zM8 10h8v2H8z" fill="#1d8c6c" stroke="#111" />
      </IconSvg>
    </NavTools>
    <TreeFrame>
      <Tree>
        {tree.map((node, i) => <TreeNode key={i} {...node} />)}
      </Tree>
      <ScrollTrack>
        <svg viewBox="0 0 16 16"><path d="M4 10l4-4 4 4" /></svg>
        <Thumb />
        <svg viewBox="0 0 16 16"><path d="M4 6l4 4 4-4" /></svg>
      </ScrollTrack>
      <ScrollTrack $across>
        <svg viewBox="0 0 16 16"><path d="M10 4L6 8l4 4" /></svg>
        <Thumb $across />
        <svg viewBox="0 0 16 16"><path d="M6 4l4 4-4 4" /></svg>
      </ScrollTrack>
      <ScrollTrack />
    </TreeFrame>
    <NavFooter>
      <NavSection type="button">单构件输入</NavSection>
      <NavSection type="button">报表预览</NavSection>
    </NavFooter>
  </Navigator>
);

const RebarTable = () => (
  <Sheet>
    <colgroup>
      {columns.map(([, w], i) => <col key={i} style={{ width: w }} />)}
    </colgroup>
    <thead>
      <tr>
        {columns.map(([title], i) => <HeadCell key={i} $hot={i === 2} scope="col">{title}</HeadCell>)}
      </tr>
    </thead>
    <tbody>
      <tr>
        <HeadCell $hot scope="row">1*</HeadCell>
        {columns.slice(1).map((c, i) => (i === 1 ? <CurrentCell key={i} /> : <td key={i} />))}
      </tr>
    </tbody>
  </Sheet>
);

const App = () => (
  <>
    <GlobalStyle />
    <Window>
      <TitleEdge />
      <MenuBar>
        <MenuList>
          {menus.map(m => <MenuItem key={m} type="button" $active={m === '绘图(D)'}>{m}</MenuItem>)}
        </MenuList>
        <Tool icon="change" label="新建变更" split />
        <Tool icon="mascot" label="广小二" />
        <Notice href="#">删除添加的部分图纸/?.</Notice>
        <AccountBar>
          <Tool icon="user" label="13907298339" split />
          <Tool label="造价豆:0" />
          <Tool icon="bell" name="消息" />
          <Overflow type="button" $end>»</Overflow>
        </AccountBar>
      </MenuBar>
      <ToolRow $tall>
        <Toolbar>
          <Tools items={fileTools} />
          <Overflow type="button">»</Overflow>
        </Toolbar>
        <Toolbar>
          <Tools items={calcTools} />
          <Overflow type="button">»</Overflow>
        </Toolbar>
        <Toolbar $grow>
          <Tools items={viewTools} />
          <Overflow type="button" $end>»</Overflow>
        </Toolbar>
      </ToolRow>
      <Body>
        <NavPanel />
        <Work>
          <ToolRow>
            <Toolbar><Grip /><Tools items={editTools} /></Toolbar>
          </ToolRow>
          <ToolRow>
            <Toolbar>
              <Grip />
              <Combo label="楼层" value="首层" narrow />
              <Combo label="构件大类" value="基础" />
              <Combo label="构件类型" value="独立基础" />
              <Combo label="构件" value="DJ-7" />
              <Combo label="单元" value="整体" />
              <Tools items={memberTools} />
            </Toolbar>
            <Toolbar><Grip /><Tools items={axisTools} /></Toolbar>
          </ToolRow>
          <ToolRow>
            <Toolbar>
              <Grip />
              <Tools items={drawTools} />
              <Combo label="绘制方式" value="" framed />
              <Tools items={layoutTools} />
            </Toolbar>
            <Toolbar><Grip /><Tool name="更多" icon="none" /></Toolbar>
          </ToolRow>
          <Scene />
          <SnapRow>
            <Toolbar><Grip /><Tools items={modeTools} /></Toolbar>
            <Toolbar><Grip /><Tools items={snapTools} /></Toolbar>
            <Toolbar>
              <Grip />
              <Combo label="偏移方式" value="不偏移" narrow />
              <Sep />
              <Unit>X=</Unit>
              <NumberField label="X" value="0" />
              <Unit>mm</Unit>
              <Unit>Y=</Unit>
              <NumberField label="Y" value="0" />
              <Unit>mm</Unit>
              <Sep />
              <RotateLabel><input type="checkbox" />旋转</RotateLabel>
              <NumberField label="旋转角度" value="0.000" wide />
              <Unit>°</Unit>
            </Toolbar>
          </SnapRow>
          <Dock>
            <DockGrip>
              <button type="button" aria-label="关闭面板">
                <svg viewBox="0 0 12 12">
                  <path d="M1.500 1.500h9v9h-9zM3 3l6 6M9 3L3 9" fill="none" stroke="#4a2430" />
                </svg>
              </button>
            </DockGrip>
            <DockPane>
              <DockToolbar>
                <Tools items={rebarTools} />
                <Total>单构件钢筋总重(kg)：0</Total>
              </DockToolbar>
              <TableWrap><RebarTable /></TableWrap>
              <ScrollLine />
            </DockPane>
          </Dock>
        </Work>
      </Body>
      <ImeBar>
        <ImeLogo viewBox="0 0 28 28">
          <rect x="2" y="2" width="24" height="24" rx="4" fill="#f0501e" transform="rotate(-8 14 14)" />
          <path d="M20 9c-3-3-11-2-11 1 0 4 11 2 11 6 0 4-9 4-12 1" fill="none" stroke="#fff" strokeWidth="3.500" />
        </ImeLogo>
        <ImeMode type="button">中</ImeMode>
        {imeIcons.map((shape, i) => <ImeIcon key={i} viewBox="0 0 16 16">{shape}</ImeIcon>)}
      </ImeBar>
      <Puck />
      <FloatBox>
        <FloatTitle>Poi...</FloatTitle>
        <StartButton type="button">开始</StartButton>
      </FloatBox>
    </Window>
  </>
);

export default App;
